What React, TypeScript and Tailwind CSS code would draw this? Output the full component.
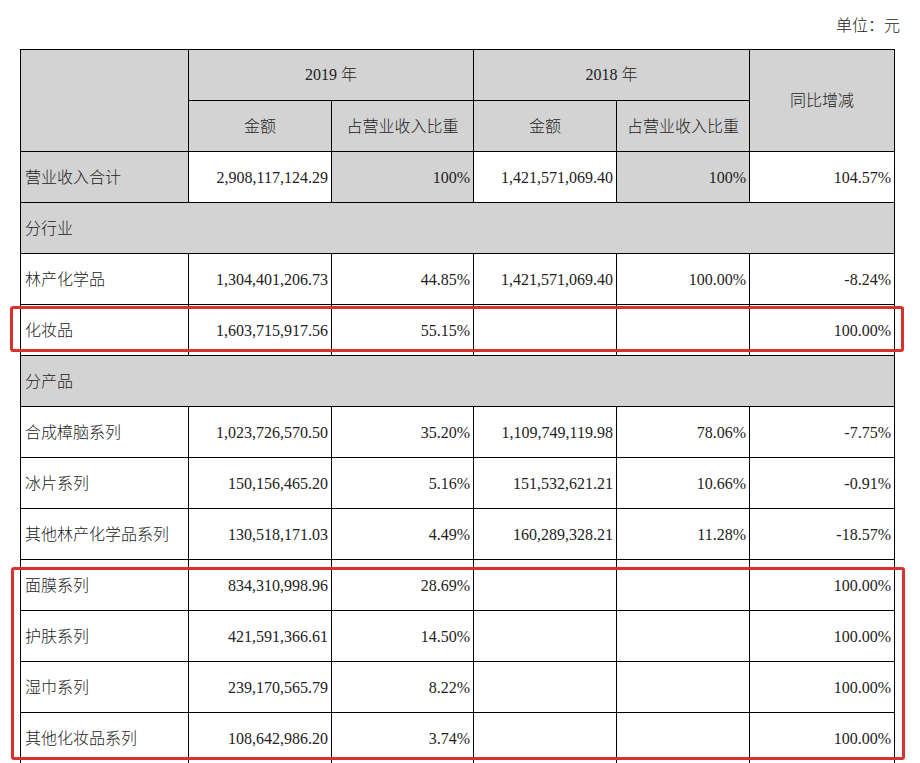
import React from "react";

const gray = "bg-[#d3d3d3]";

type Row = {
  label: string;
  a19?: string;
  p19?: string;
  a18?: string;
  p18?: string;
  yoy?: string;
  section?: boolean;
  total?: boolean;
};

const rows: Row[] = [
  { label: "营业收入合计", a19: "2,908,117,124.29", p19: "100%", a18: "1,421,571,069.40", p18: "100%", yoy: "104.57%", total: true },
  { label: "分行业", section: true },
  { label: "林产化学品", a19: "1,304,401,206.73", p19: "44.85%", a18: "1,421,571,069.40", p18: "100.00%", yoy: "-8.24%" },
  { label: "化妆品", a19: "1,603,715,917.56", p19: "55.15%", yoy: "100.00%" },
  { label: "分产品", section: true },
  { label: "合成樟脑系列", a19: "1,023,726,570.50", p19: "35.20%", a18: "1,109,749,119.98", p18: "78.06%", yoy: "-7.75%" },
  { label: "冰片系列", a19: "150,156,465.20", p19: "5.16%", a18: "151,532,621.21", p18: "10.66%", yoy: "-0.91%" },
  { label: "其他林产化学品系列", a19: "130,518,171.03", p19: "4.49%", a18: "160,289,328.21", p18: "11.28%", yoy: "-18.57%" },
  { label: "面膜系列", a19: "834,310,998.96", p19: "28.69%", yoy: "100.00%" },
  { label: "护肤系列", a19: "421,591,366.61", p19: "14.50%", yoy: "100.00%" },
  { label: "湿巾系列", a19: "239,170,565.79", p19: "8.22%", yoy: "100.00%" },
  { label: "其他化妆品系列", a19: "108,642,986.20", p19: "3.74%", yoy: "100.00%" },
];

function Num({ v, bg = "bg-white" }: { v?: string; bg?: string }) {
  return (
    <div className={`${bg} flex items-center justify-end pr-[3px] pt-[2px] text-[16px]`}>{v}</div>
  );
}

export default function App() {
  return (
    <div
      className="relative w-[920px] h-[763px] overflow-hidden bg-white text-[#222]"
      style={{ fontFamily: '"Liberation Serif", "Noto Sans CJK SC", serif' }}
    >
      <div className="h-[49px] flex items-center justify-end pr-[20px] pt-[2px] text-[16px] font-light">单位：元</div>

      <div className="ml-[20px] w-[875px] bg-black p-px grid gap-px grid-cols-[167px_142px_141px_142px_132px_144px] auto-rows-[50px]">
        {/* header */}
        <div className={`${gray} row-span-2`} />
        <div className={`${gray} col-span-2 flex items-center justify-center text-[16px] font-light`}>2019 年</div>
        <div className={`${gray} col-span-2 flex items-center justify-center text-[16px] font-light`}>2018 年</div>
        <div className={`${gray} row-span-2 flex items-center justify-center text-[16px] font-light`}>同比增减</div>
        <div className={`${gray} flex items-center justify-center pt-[2px] text-[16px] font-light`}>金额</div>
        <div className={`${gray} flex items-center justify-center pt-[2px] text-[16px] font-light`}>占营业收入比重</div>
        <div className={`${gray} flex items-center justify-center pt-[2px] text-[16px] font-light`}>金额</div>
        <div className={`${gray} flex items-center justify-center pt-[2px] text-[16px] font-light`}>占营业收入比重</div>

        {rows.map((r) =>
          r.section ? (
            <div key={r.label} className={`${gray} col-span-6 flex items-center pl-[4px] pt-[2px] text-[16px] font-light`}>
              {r.label}
            </div>
          ) : (
            <React.Fragment key={r.label}>
              <div className={`${r.total ? gray : "bg-white"} flex items-center pl-[4px] pt-[2px] text-[16px] font-light`}>{r.label}</div>
              <Num v={r.a19} />
              <Num v={r.p19} bg={r.total ? gray : "bg-white"} />
              <Num v={r.a18} />
              <Num v={r.p18} bg={r.total ? gray : "bg-white"} />
              <Num v={r.yoy} />
            </React.Fragment>
          )
        )}
      </div>

      {/* red highlight annotations */}
      <div className="absolute left-[10px] top-[306px] w-[894px] h-[46px] border-[3px] border-[#d8322c] rounded-[3px]" />
      <div className="absolute left-[11px] top-[567px] w-[894px] h-[193px] border-[3px] border-[#d8322c] rounded-[3px]" />
    </div>
  );
}
